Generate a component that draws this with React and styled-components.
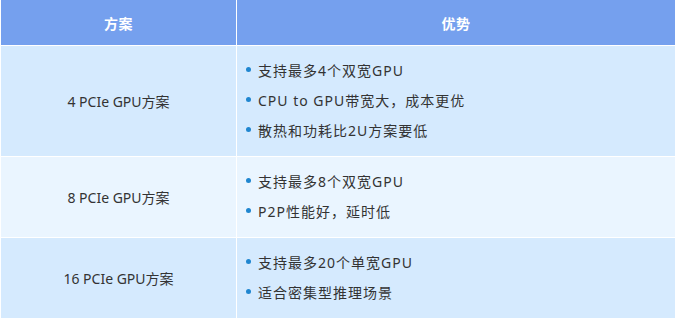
import React from "react";
import styled, { createGlobalStyle } from "styled-components";

const Global = createGlobalStyle`
  html, body { margin: 0; padding: 0; background: #fff; }
  body { font-family: "Noto Sans", "Noto Sans CJK SC", sans-serif; }
`;

const Table = styled.div`
  width: 675px;
  display: grid;
  grid-template-columns: 235px 1fr;
  grid-template-rows: 45px 110px 80px 80px;
  gap: 1px;
  padding: 0 0 1px 1px;
  background: #fff;
  box-sizing: border-box;
`;

const HeadCell = styled.div`
  background: #75a0ee;
  color: #fff;
  font-weight: bold;
  font-size: 14px;
  letter-spacing: 0.5px;
  display: flex;
  align-items: center;
  justify-content: center;
`;

const rowBg = { odd: "#d5eafe", even: "#eaf5ff" };

const NameCell = styled.div`
  background: ${(p) => rowBg[p.$tone]};
  color: #333;
  font-size: 14px;
  display: flex;
  align-items: center;
  justify-content: center;
`;

const ListCell = styled.ul`
  margin: 0;
  background: ${(p) => rowBg[p.$tone]};
  list-style: none;
  padding: 0 0 3px 9px;
  display: flex;
  flex-direction: column;
  justify-content: center;
`;

const Item = styled.li`
  display: flex;
  align-items: center;
  height: 30px;
  font-size: 14px;
  letter-spacing: 1px;
  color: #333;
  &::before {
    content: "";
    width: 5px;
    height: 5px;
    border-radius: 50%;
    background: #1f86d0;
    margin-right: 7px;
    flex: none;
  }
`;

const rows = [
  {
    name: "4 PCIe GPU方案",
    tone: "odd",
    items: ["支持最多4个双宽GPU", "CPU to GPU带宽大，成本更优", "散热和功耗比2U方案要低"],
  },
  {
    name: "8 PCIe GPU方案",
    tone: "even",
    items: ["支持最多8个双宽GPU", "P2P性能好，延时低"],
  },
  {
    name: "16 PCIe GPU方案",
    tone: "odd",
    items: ["支持最多20个单宽GPU", "适合密集型推理场景"],
  },
];

export default function App() {
  return (
    <>
      <Global />
      <Table>
        <HeadCell>方案</HeadCell>
        <HeadCell>优势</HeadCell>
        {rows.map((r) => (
          <React.Fragment key={r.name}>
            <NameCell $tone={r.tone}>{r.name}</NameCell>
            <ListCell $tone={r.tone}>
              {r.items.map((t) => (
                <Item key={t}>{t}</Item>
              ))}
            </ListCell>
          </React.Fragment>
        ))}
      </Table>
    </>
  );
}
